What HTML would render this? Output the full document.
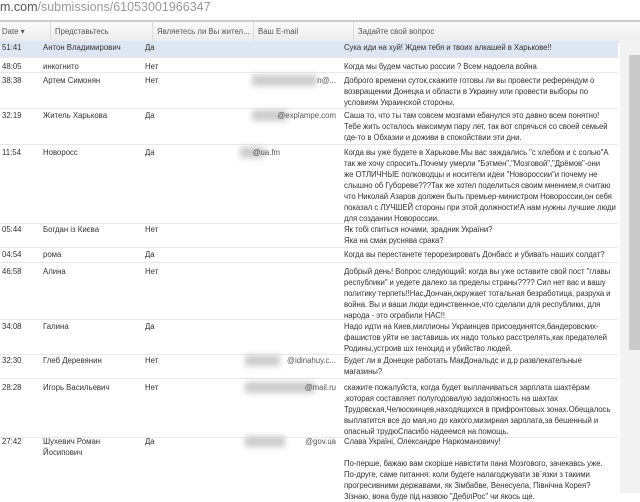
<!DOCTYPE html>
<html><head><meta charset="utf-8"><style>
body{margin:0;width:640px;height:493px;overflow:hidden;background:#fff;font-family:"Liberation Sans",Arial,sans-serif;color:#333;position:relative}
.url{position:absolute;left:0;top:0;font-size:12.5px;color:#555}
.url span{color:#999}
.hdr{position:absolute;left:0;top:20px;width:640px;height:20px;background:linear-gradient(#fafafa,#ececec);border-top:2px solid #ccc;border-bottom:1px solid #ddd;font-size:7.8px;color:#555}
.hdr div{position:absolute;top:0;height:20px;border-left:1px solid #ddd;padding-left:4px;line-height:20px}
.r{position:absolute;left:0;width:618px;font-size:7.8px;line-height:11px;border-bottom:1px solid #e8e8e8;white-space:nowrap}
.r div{position:absolute;top:0}
.d{left:2px}.n{left:43px}.y{left:145px}.q{left:344px;letter-spacing:-0.08px}
.e{left:230px;width:106px;text-align:right;color:#555}
.blur{position:absolute;background:#ccc;filter:blur(3px);height:11px}
.sb{position:absolute;left:620px;top:40px;width:20px;height:453px;background:#f2f2f2}
.th{position:absolute;left:629px;top:55px;width:11px;height:295px;background:#cacaca}
</style></head><body>
<div class="url">m.com<span>/submissions/61053001966347</span></div>
<div class="hdr">
<div style="left:0;border:none;padding-left:2px">Date ▾</div>
<div style="left:50px">Представьтесь</div>
<div style="left:152px">Являетесь ли Вы жител...</div>
<div style="left:253px">Ваш E-mail</div>
<div style="left:353px">Задайте свой вопрос</div>
</div>
<div class="r" style="top:41px;height:15px;background:#dde6f2;padding-top:1px"><div class="d" style="top:1px">51:41</div><div class="n" style="top:1px">Антон Владимирович</div><div class="y" style="top:1px">Да</div><div class="q" style="top:1px">Сука иди на хуй! Ждем тебя и твоих алкашей в Харькове!!</div></div>
<div class="r" style="top:61px;height:11px"><div class="d">48:05</div><div class="n">инкогнито</div><div class="y">Нет</div><div class="q">Когда мы будем частью россии ? Всем надоела война</div></div>
<div class="r" style="top:75px;height:33px"><div class="blur" style="left:252px;width:65px;top:0"></div><div class="d">38:38</div><div class="n">Артем Симонян</div><div class="y">Нет</div><div class="e">n@...</div><div class="q">Доброго времени суток,скажите готовы ли вы провести референдум о<br>возвращении Донецка и области в Украину или провести выборы по<br>условиям Украинской стороны.</div></div>
<div class="r" style="top:110px;height:34px"><div class="blur" style="left:252px;width:35px;top:0"></div><div class="d">32:19</div><div class="n">Житель Харькова</div><div class="y">Да</div><div class="e">@explampe.com</div><div class="q">Саша то, что ты там совсем мозгами ебанулся это давно всем понятно!<br>Тебе жить осталось максимум пару лет, так вот спрячься со своей семьей<br>где-то в Обхазии и доживи в спокойствии эти дни.</div></div>
<div class="r" style="top:147px;height:76px"><div class="blur" style="left:240px;width:25px;top:0"></div><div class="d">11:54</div><div class="n">Новоросс</div><div class="y">Да</div><div class="e" style="left:180px;width:100px">@ua.fm</div><div class="q">Когда вы уже будете в Харькове.Мы вас заждались "с хлебом и с солью"А<br>так же хочу спросить.Почему умерли "Бэтмен","Мозговой","Дрёмов"-они<br>же ОТЛИЧНЫЕ полководцы и носители идеи "Новороссии"и почему не<br>слышно об Губореве???Так же хотел поделиться своим мнением,я считаю<br>что Николай Азаров должен быть премьер-министром Новороссии,он себя<br>показал с ЛУЧШЕЙ стороны при этой должности!А нам нужны лучшие люди<br>для создании Новороссии.</div></div>
<div class="r" style="top:224px;height:23px"><div class="d">05:44</div><div class="n">Богдан із Києва</div><div class="y">Нет</div><div class="q">Як тобі спиться ночами, зрадник України?<br>Яка на смак руснява срака?</div></div>
<div class="r" style="top:249px;height:13px"><div class="d">04:54</div><div class="n">рома</div><div class="y">Да</div><div class="q">Когда вы перестанете терорезировать Донбасс и убивать наших солдат?</div></div>
<div class="r" style="top:266px;height:53px"><div class="d">46:58</div><div class="n">Алина</div><div class="y">Нет</div><div class="q">Добрый день! Вопрос следующий: когда вы уже оставите свой пост "главы<br>республики" и уедете далеко за пределы страны???? Сил нет вас и вашу<br>политику терпеть!!Нас,Дончан,окружает тотальная безработица, разруха и<br>война. Вы и ваши люди единственное,что сделали для республики, для<br>народа - это ограбили НАС!!</div></div>
<div class="r" style="top:321px;height:33px"><div class="d">34:08</div><div class="n">Галина</div><div class="y">Да</div><div class="q">Надо идти на Киев,миллионы Украинцев присоединятся,бандеровских-<br>фашистов уйти не заставишь их надо только расстрелять,как предателей<br>Родины,устроив шх геноцид и убийство людей.</div></div>
<div class="r" style="top:355px;height:23px"><div class="blur" style="left:245px;width:35px;top:0"></div><div class="d">32:30</div><div class="n">Глеб Деревянин</div><div class="y">Нет</div><div class="e">@idinahuy.c...</div><div class="q">Будет ли в Донецке работать МакДональдс и д.р развлекательные<br>магазины?</div></div>
<div class="r" style="top:382px;height:55px"><div class="blur" style="left:245px;width:70px;top:0"></div><div class="d">28:28</div><div class="n">Игорь Васильевич</div><div class="y">Нет</div><div class="e">@mail.ru</div><div class="q">скажите пожалуйста, когда будет выплачиваться зарплата шахтёрам<br>,которая составляет полугодовалую задолжность на шахтах<br>Трудовская,Челюскинцев,находящихся в прифронтовых зонах.Обещалось<br>выплатится все до мая,но до какого,мизирная зарплата,за бешенный и<br>опасный трудюСпасибо надеемся на помощь.</div></div>
<div class="r" style="top:436px;height:60px;border:none"><div class="blur" style="left:245px;width:40px;top:0"></div><div class="d">27:42</div><div class="n">Шухевич Роман<br>Йосипович</div><div class="y">Да</div><div class="e">@gov.ua</div><div class="q">Слава Україні, Олександре Наркомановичу!<br><br>По-перше, бажаю вам скоріше навістити пана Мозгового, зачекавсь уже.<br>По-друге, саме питання: коли будете налагоджувати зв`язки з такими<br>прогресивними державами, як Зімбабве, Венесуела, Північна Корея?<br>Зізнаю, вона буде під назвою "ДебілРос" чи якось ще.</div></div>
<div class="sb"></div><div class="th"></div>
</body></html>
